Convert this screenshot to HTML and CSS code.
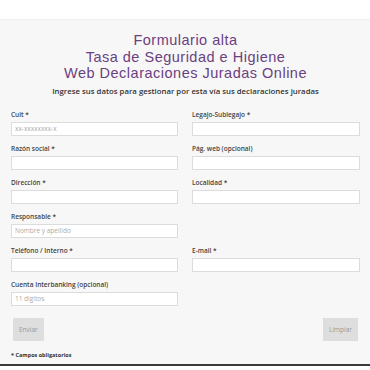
FILE: index.html
```html
<!DOCTYPE html>
<html lang="es">

<head>
  <meta charset="UTF-8">
  <meta name="viewport" content="width=device-width, initial-scale=1.0">
  <link rel="stylesheet" href="styles.css">
  <title>Formulario alta</title>
</head>

<body>
  <div class="topBar"></div>
  <div class="panel">
    <h1 class="title">Formulario alta<br>Tasa de Seguridad e Higiene<br>Web Declaraciones Juradas Online</h1>
    <p class="subtitle">Ingrese sus datos para gestionar por esta vía sus declaraciones juradas</p>

    <form class="formGrid">
      <div class="field">
        <label>Cuit *</label>
        <input type="text" placeholder="xx-xxxxxxxx-x">
      </div>
      <div class="field">
        <label>Legajo-Sublegajo *</label>
        <input type="text">
      </div>
      <div class="field">
        <label>Razón social *</label>
        <input type="text">
      </div>
      <div class="field">
        <label>Pág. web (opcional)</label>
        <input type="text">
      </div>
      <div class="field">
        <label>Dirección *</label>
        <input type="text">
      </div>
      <div class="field">
        <label>Localidad *</label>
        <input type="text">
      </div>
      <div class="field">
        <label>Responsable *</label>
        <input type="text" placeholder="Nombre y apellido">
      </div>
      <div class="field"></div>
      <div class="field">
        <label>Teléfono / Interno *</label>
        <input type="text">
      </div>
      <div class="field">
        <label>E-mail *</label>
        <input type="text">
      </div>
      <div class="field">
        <label>Cuenta Interbanking (opcional)</label>
        <input type="text" placeholder="11 dígitos">
      </div>
      <div class="field"></div>
    </form>

    <div class="buttons">
      <button class="btn">Enviar</button>
      <button class="btn">Limpiar</button>
    </div>
    <p class="note">* Campos obligatorios</p>
  </div>
</body>

</html>
```

FILE: styles.css
```css
body {
  margin: 0;
  background-color: #fff;
  font-family: "Open Sans", "Liberation Sans", sans-serif;
}

.topBar {
  height: 19px;
  background-color: #fff;
  border-bottom: 1px solid #f0f0f0;
}

.panel {
  background-color: #f7f7f7;
  padding: 12px 10px 0 11px;
  height: 332px;
  border-bottom: 2px solid #3a3a3a;
}

.title {
  margin: 0;
  text-align: center;
  font-family: "Liberation Sans", Arial, sans-serif;
  font-size: 14.5px;
  line-height: 16.5px;
  letter-spacing: 0.5px;
  font-weight: normal;
  color: #6b3f80;
}

.subtitle {
  margin: 4px 0 0;
  text-align: center;
  font-size: 7.8px;
  line-height: 10px;
  font-weight: 600;
  color: #333;
}

.formGrid {
  display: grid;
  grid-template-columns: 167px 168px;
  column-gap: 14px;
  row-gap: 8px;
  margin-top: 14px;
}

.field label {
  display: block;
  font-size: 6.5px;
  line-height: 9px;
  font-weight: 600;
  color: #444;
  margin-bottom: 3px;
}

.field input {
  display: block;
  box-sizing: border-box;
  width: 100%;
  height: 14px;
  margin: 0;
  padding: 0 3px;
  border: 1px solid #dcdcdc;
  background-color: #fff;
  font-family: inherit;
  font-size: 6.5px;
}

.field input::placeholder {
  color: #aaa;
}

.buttons {
  display: flex;
  justify-content: space-between;
  margin-top: 12px;
  padding: 0 2px 0 2px;
}

.btn {
  height: 23px;
  padding: 0 6px;
  border: none;
  background-color: #dedede;
  color: #999;
  font-family: inherit;
  font-size: 6.5px;
}

.note {
  margin: 10px 0 0;
  font-size: 5.5px;
  line-height: 8px;
  font-weight: bold;
  color: #333;
}
```
